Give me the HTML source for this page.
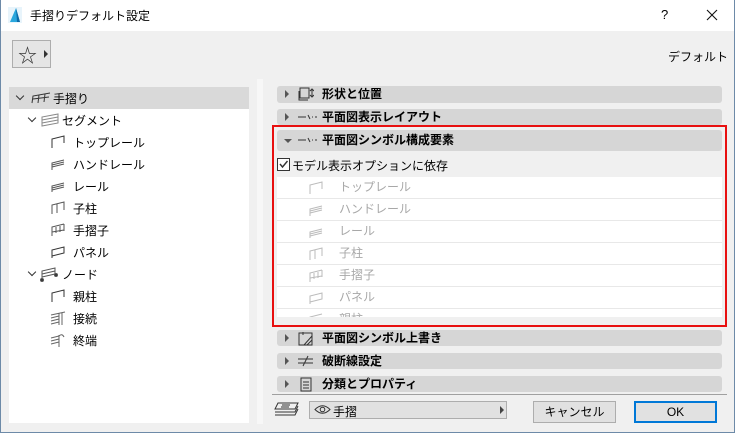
<!DOCTYPE html>
<html><head><meta charset="utf-8"><style>
*{margin:0;padding:0;box-sizing:border-box}
body{width:735px;height:433px;position:relative;background:#f0f0f0;font-family:"Liberation Sans","Noto Sans CJK JP",sans-serif;font-size:12px;color:#000;overflow:hidden}
.a{position:absolute}
.win{position:absolute;left:0;top:0;width:735px;height:433px;border:1px solid #6d8aa8;border-top:none}
.title{left:0;top:0;width:735px;height:31px;background:#fff}
.hdr{position:absolute;left:277px;width:445px;background:#d6d6d6;border-radius:3px;font-weight:bold;font-size:12px;line-height:16px}
.hdr .tri{position:absolute;left:8px;top:4px;width:0;height:0;border-left:4px solid #555;border-top:4px solid transparent;border-bottom:4px solid transparent}
.hdr .t{position:absolute;left:45px}
.row{position:absolute;left:277px;width:445px;height:21px;background:#fff;color:#a8a8a8;font-size:12px;line-height:21px}
.row span{position:absolute;left:62px}
.tree{position:absolute;font-size:12px}
.chev{position:absolute;width:6px;height:6px;border-right:1.5px solid #333;border-bottom:1.5px solid #333;transform:rotate(45deg)}
.btn{position:absolute;background:#e1e1e1;border:1px solid #adadad;text-align:center;font-size:12px}
</style></head><body>
<div class="a title"></div>
<svg class="a" style="left:8px;top:7px" width="14" height="16"><rect width="14" height="16" fill="#e8f4fb"/><path d="M2 15 L8 1 L12 15 Z" fill="#2aa7dd"/><path d="M8 1 L12 15 L9 15 Z" fill="#0d6aa8"/></svg>
<div class="a" style="left:30px;top:7px;font-size:12px">手摺りデフォルト設定</div>
<div class="a" style="left:661px;top:7px;font-size:13px">?</div>
<svg class="a" style="left:706px;top:9px" width="12" height="12" stroke="#111" stroke-width="1.1"><path d="M1 1 L11 11 M11 1 L1 11"/></svg>

<div class="a" style="left:12px;top:40px;width:39px;height:28px;border:1px solid #adadad;background:#e5e5e5"></div>
<div class="a" style="left:18px;top:41px;font-size:19px;color:#333">☆</div>
<div class="a" style="left:44px;top:50px;border-left:4px solid #333;border-top:4px solid transparent;border-bottom:4px solid transparent"></div>
<div class="a" style="left:668px;top:48px;font-size:12px">デフォルト</div>

<div class="a" style="left:9px;top:87px;width:240px;height:336px;background:#fff"></div>
<div class="a" style="left:9px;top:87px;width:240px;height:22px;background:#d9d9d9"></div>
<div class="chev" style="left:17px;top:93px"></div>
<svg class="a" style="left:31px;top:92px" width="20" height="12" stroke="#333" fill="none"><path d="M1 11 L2 4 L19 1 M7 11 L8 3 M13 10 L14 2 M2 7 L18 5"/></svg>
<div class="tree" style="left:53px;top:90px">手摺り</div>
<div class="chev" style="left:29px;top:115px"></div>
<svg class="a" style="left:41px;top:113px" width="18" height="14" stroke="#888" fill="none"><path d="M1 13 L1 4 L17 1 L17 10 Z M1 7 L17 4 M1 10 L17 7"/></svg>
<div class="tree" style="left:62px;top:112px">セグメント</div>
<svg class="a" style="left:51px;top:135px" width="14" height="14" stroke="#333" fill="none"><path d="M1 13 L1 4 L13 1 L13 8"/></svg>
<div class="tree" style="left:73px;top:134px">トップレール</div>
<svg class="a" style="left:51px;top:157px" width="14" height="14" stroke="#555" fill="none"><path d="M1 13 L1 6 L13 3 M1 8 L13 5 M1 10 L13 7"/></svg>
<div class="tree" style="left:73px;top:156px">ハンドレール</div>
<svg class="a" style="left:51px;top:179px" width="14" height="14" stroke="#555" fill="none"><path d="M1 13 L1 7 L13 4 M1 9 L13 6 M1 11 L13 8"/></svg>
<div class="tree" style="left:73px;top:178px">レール</div>
<svg class="a" style="left:51px;top:201px" width="14" height="14" stroke="#555" fill="none"><path d="M1 13 L1 4 L13 1 L13 9 M6 3 L6 12"/></svg>
<div class="tree" style="left:73px;top:200px">子柱</div>
<svg class="a" style="left:51px;top:223px" width="14" height="14" stroke="#555" fill="none"><path d="M1 13 L1 4 L13 1 M1 9 L13 7 M5 4 L5 10 M9 3 L9 9 M13 1 L13 8"/></svg>
<div class="tree" style="left:73px;top:222px">手摺子</div>
<svg class="a" style="left:51px;top:245px" width="14" height="14" stroke="#333" fill="none"><path d="M1 13 L1 5 L13 2 L13 8 L1 11"/></svg>
<div class="tree" style="left:73px;top:244px">パネル</div>
<div class="chev" style="left:29px;top:269px"></div>
<svg class="a" style="left:40px;top:266px" width="18" height="16" stroke="#555" fill="none"><path d="M2 14 L2 5 L15 2 L15 10 M2 8 L15 5 M2 11 L15 8"/><circle cx="2" cy="14" r="1.5" fill="#333"/><circle cx="16" cy="9" r="1.5" fill="#333"/></svg>
<div class="tree" style="left:62px;top:266px">ノード</div>
<svg class="a" style="left:51px;top:289px" width="14" height="14" stroke="#333" fill="none"><path d="M1 13 L1 4 L13 1 L13 8"/></svg>
<div class="tree" style="left:73px;top:288px">親柱</div>
<svg class="a" style="left:50px;top:310px" width="16" height="16" stroke="#666" fill="none"><path d="M1 5 L15 2 M1 8 L9 6 M1 11 L9 9 M1 14 L9 12 M9 3 L9 15 M12 3 L12 15"/></svg>
<div class="tree" style="left:73px;top:310px">接続</div>
<svg class="a" style="left:50px;top:332px" width="16" height="16" stroke="#666" fill="none"><path d="M1 6 L9 4 M1 9 L9 7 M1 12 L9 10 M9 4 Q12 1 14 5 M9 3 L9 15"/></svg>
<div class="tree" style="left:73px;top:332px">終端</div>

<div class="a" style="left:257px;top:79px;width:6px;height:345px;background:#f7f7f7"></div>

<div class="hdr" style="top:86px;height:17px"><div class="tri"></div>
<svg class="a" style="left:21px;top:1px" width="16" height="15" stroke="#333" fill="none"><rect x="2" y="1" width="9" height="10"/><path d="M1 4 L1 13 L10 13 M14 2 L14 10 M12 4 L14 2 L16 4 M12 8 L14 10 L16 8"/></svg>
<span class="t" style="top:0">形状と位置</span></div>
<div class="hdr" style="top:109px;height:16px"><div class="tri"></div>
<svg class="a" style="left:21px;top:4px" width="20" height="8" stroke="#333" fill="none"><path d="M0 4 L8 4 M10 2 L12 6 M14 4 L15 4 M17 4 L19 4"/></svg>
<span class="t" style="top:0">平面図表示レイアウト</span></div>
<div class="hdr" style="top:130px;height:21px;line-height:21px"><div class="a" style="left:7px;top:9px;border-top:4px solid #555;border-left:4px solid transparent;border-right:4px solid transparent"></div>
<svg class="a" style="left:21px;top:6px" width="20" height="8" stroke="#333" fill="none"><path d="M0 4 L8 4 M10 2 L12 6 M14 4 L15 4 M17 4 L19 4"/></svg>
<span class="t" style="top:0">平面図シンボル構成要素</span></div>
<div class="a" style="left:277px;top:158px;width:13px;height:13px;border:1px solid #333;background:#fff"></div>
<svg class="a" style="left:278px;top:159px" width="11" height="11" stroke="#333" stroke-width="1.4" fill="none"><path d="M2 5 L4.5 8 L9.5 2"/></svg>
<div class="a" style="left:292px;top:157px">モデル表示オプションに依存</div>

<div class="a" style="left:277px;top:177px;width:445px;height:140px;background:#e8e8e8"></div>
<div class="row" style="top:177px"><svg class="a" style="left:32px;top:4px" width="14" height="14" stroke="#bbb" fill="none"><path d="M1 13 L1 4 L13 1 L13 8"/></svg><span>トップレール</span></div>
<div class="row" style="top:199px"><svg class="a" style="left:32px;top:4px" width="14" height="14" stroke="#bbb" fill="none"><path d="M1 13 L1 6 L13 3 M1 8 L13 5 M1 10 L13 7"/></svg><span>ハンドレール</span></div>
<div class="row" style="top:221px"><svg class="a" style="left:32px;top:4px" width="14" height="14" stroke="#bbb" fill="none"><path d="M1 13 L1 7 L13 4 M1 9 L13 6 M1 11 L13 8"/></svg><span>レール</span></div>
<div class="row" style="top:243px"><svg class="a" style="left:32px;top:4px" width="14" height="14" stroke="#bbb" fill="none"><path d="M1 13 L1 4 L13 1 L13 9 M6 3 L6 12"/></svg><span>子柱</span></div>
<div class="row" style="top:265px"><svg class="a" style="left:32px;top:4px" width="14" height="14" stroke="#bbb" fill="none"><path d="M1 13 L1 4 L13 1 M1 9 L13 7 M5 4 L5 10 M9 3 L9 9 M13 1 L13 8"/></svg><span>手摺子</span></div>
<div class="row" style="top:287px"><svg class="a" style="left:32px;top:4px" width="14" height="14" stroke="#bbb" fill="none"><path d="M1 13 L1 5 L13 2 L13 8 L1 11"/></svg><span>パネル</span></div>
<div class="row" style="top:309px;height:8px;overflow:hidden"><svg class="a" style="left:32px;top:4px" width="14" height="14" stroke="#bbb" fill="none"><path d="M1 13 L1 4 L13 1"/></svg><span>親柱</span></div>

<div class="a" style="left:272px;top:125px;width:455px;height:202px;border:2px solid #e81010"></div>

<div class="hdr" style="top:330px;height:16px"><div class="tri"></div>
<svg class="a" style="left:21px;top:1px" width="16" height="15" stroke="#333" fill="none"><rect x="1" y="2" width="13" height="12"/><path d="M6 14 L14 5 M9 14 L14 9 M5 1 L5 4"/></svg>
<span class="t">平面図シンボル上書き</span></div>
<div class="hdr" style="top:353px;height:16px"><div class="tri"></div>
<svg class="a" style="left:21px;top:2px" width="16" height="12" stroke="#333" fill="none"><path d="M0 4 L15 4 M0 8 L15 8 M5 11 L10 1"/></svg>
<span class="t">破断線設定</span></div>
<div class="hdr" style="top:376px;height:16px"><div class="tri"></div>
<svg class="a" style="left:23px;top:1px" width="12" height="15" stroke="#333" fill="none"><rect x="1" y="1" width="10" height="13"/><path d="M3 5 L9 5 M3 8 L9 8 M3 11 L9 11"/></svg>
<span class="t">分類とプロパティ</span></div>

<div class="a" style="left:272px;top:394px;width:455px;height:1px;background:#a0a0a0"></div>

<svg class="a" style="left:274px;top:401px" width="26" height="16" stroke="#333" fill="none"><path d="M4 2 L24 2 L21 8 L1 8 Z M1 11 L21 11 L24 5 M1 14 L21 14 L24 8 M8 4 L16 4 M7 6 L15 6"/></svg>
<div class="a" style="left:309px;top:401px;width:198px;height:18px;background:#e1e1e1;border:1px solid #adadad"></div>
<svg class="a" style="left:314px;top:404px" width="17" height="11" stroke="#333" fill="none"><path d="M1 5.5 Q8.5 -2 16 5.5 Q8.5 13 1 5.5 Z"/><circle cx="8.5" cy="5.5" r="2.3"/></svg>
<div class="a" style="left:333px;top:403px">手摺</div>
<div class="a" style="left:500px;top:406px;border-left:4px solid #444;border-top:4px solid transparent;border-bottom:4px solid transparent"></div>

<div class="btn" style="left:533px;top:401px;width:83px;height:22px;line-height:20px">キャンセル</div>
<div class="btn" style="left:634px;top:401px;width:83px;height:22px;line-height:18px;border:2px solid #0078d7">OK</div>

<div class="win"></div>
</body></html>
